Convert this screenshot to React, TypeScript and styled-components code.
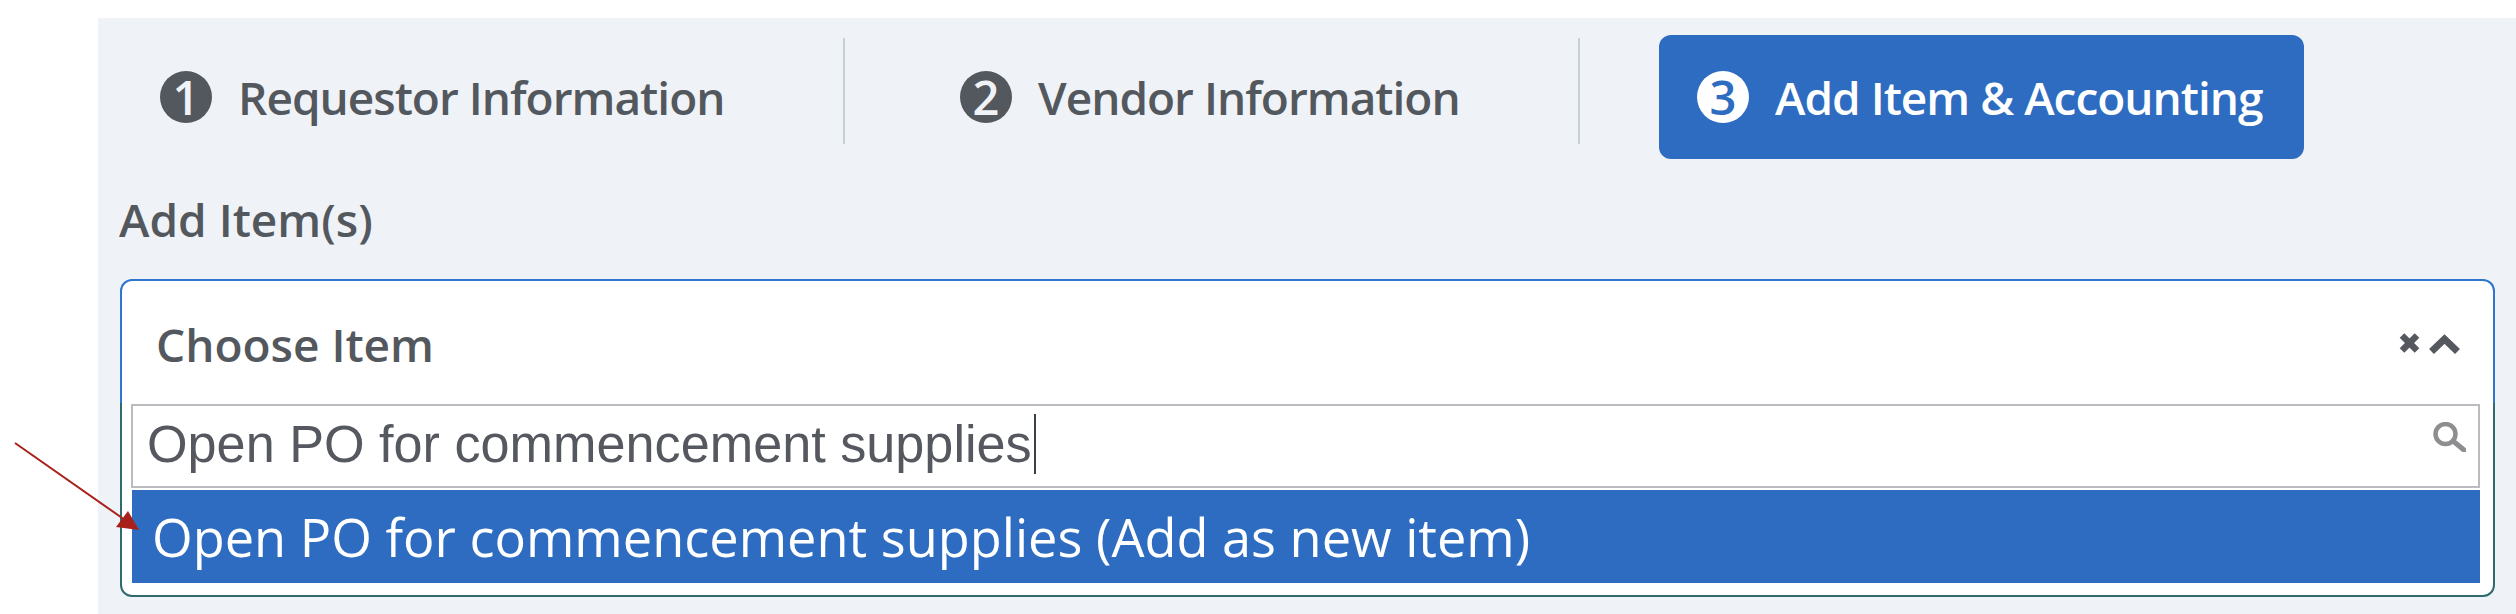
import React from "react";
import styled, { createGlobalStyle } from "styled-components";

const Global = createGlobalStyle`
  html, body { margin: 0; padding: 0; background: #fff; }
  body { width: 2516px; height: 614px; overflow: hidden; font-family: "Open Sans", sans-serif; }
`;

const Page = styled.div`
  position: relative;
  width: 2516px;
  height: 614px;
  padding: 18px 0 0 98px;
  box-sizing: border-box;
`;

const Panel = styled.div`
  height: 596px;
  background: #eff3f7;
  padding: 17px 21px 17px 21px;
  box-sizing: border-box;
`;

const Steps = styled.div`
  display: flex;
  align-items: center;
  height: 124px;
`;

const Step = styled.div<{ $active?: boolean; $width: number; $pad: number }>`
  display: flex;
  align-items: center;
  gap: 26px;
  width: ${(p) => p.$width}px;
  height: 124px;
  padding-left: ${(p) => p.$pad}px;
  box-sizing: border-box;
  border-radius: 12px;
  background: ${(p) => (p.$active ? "#2d6cc0" : "transparent")};
  color: ${(p) => (p.$active ? "#fff" : "#53585e")};
  font-size: 46px;
  letter-spacing: -1px;
  font-weight: 600;
  white-space: nowrap;
`;

const Num = styled.span<{ $active?: boolean }>`
  display: flex;
  align-items: center;
  justify-content: center;
  width: 52px;
  height: 52px;
  flex: none;
  border-radius: 50%;
  background: ${(p) => (p.$active ? "#fff" : "#53585e")};
  color: ${(p) => (p.$active ? "#2d6cc0" : "#eff3f7")};
  font-size: 47px;
  font-weight: 600;
  letter-spacing: 0;
  line-height: 1;
`;

const Divider = styled.div<{ $gap: number }>`
  width: 2px;
  height: 106px;
  align-self: flex-start;
  margin-top: 3px;
  background: #c6d1d6;
  margin-right: ${(p) => p.$gap}px;
`;

const Label = styled.div`
  margin-top: 32px;
  font-size: 46px;
  line-height: 56px;
  font-weight: 600;
  color: #53585e;
`;

const Select = styled.div`
  margin-top: 32px;
  margin-left: 1px;
  width: 2375px;
  height: 318px;
  box-sizing: border-box;
  border: 2px solid transparent;
  border-radius: 12px;
  background:
    linear-gradient(#fff, #fff) padding-box,
    linear-gradient(#2f76cf 0 124px, #2f6b6e 124px) border-box;
  padding: 0 13px 12px 9px;
  display: flex;
  flex-direction: column;
`;

const Head = styled.div`
  height: 123px;
  flex: none;
  box-sizing: border-box;
  display: flex;
  align-items: center;
  padding: 2px 20px 0 25px;
  color: #53585e;
  font-size: 46px;
  font-weight: 600;
`;

const HeadText = styled.span`
  flex: 1;
`;

const HeadIcons = styled.span`
  display: flex;
  align-items: center;
  gap: 9px;
  color: #55585e;
`;

const ClearIcon = styled.svg`
  margin-bottom: 2px;
`;

const Search = styled.div`
  height: 84px;
  flex: none;
  box-sizing: border-box;
  border: 2px solid #bcbcc0;
  display: flex;
  align-items: center;
  padding: 0 12px 4px 14px;
  font-family: "Liberation Sans", Arial, sans-serif;
  font-size: 52.2px;
  color: #55585e;
`;

const Caret = styled.span`
  display: inline-block;
  width: 2px;
  height: 60px;
  margin-left: 2px;
  background: #3a4048;
`;

const SearchIcon = styled.svg`
  margin-left: auto;
  margin-bottom: 14px;
  color: #8e8e90;
`;

const Option = styled.div`
  height: 93px;
  margin-top: 2px;
  margin-left: 1px;
  flex: none;
  display: flex;
  align-items: center;
  padding-left: 20px;
  background: #2d6cc0;
  color: #fff;
  font-size: 52.3px;
`;

const Arrow = styled.svg`
  position: absolute;
  left: 0;
  top: 430px;
`;

export default function App() {
  return (
    <Page>
      <Global />
      <Panel>
        <Steps>
          <Step $width={724} $pad={41}>
            <Num>1</Num>
            Requestor Information
          </Step>
          <Divider $gap={0} />
          <Step $width={733} $pad={115}>
            <Num>2</Num>
            Vendor Information
          </Step>
          <Divider $gap={79} />
          <Step $active $width={645} $pad={38}>
            <Num $active>3</Num>
            Add Item &amp; Accounting
          </Step>
        </Steps>
        <Label>Add Item(s)</Label>
        <Select>
          <Head>
            <HeadText>Choose Item</HeadText>
            <HeadIcons>
              <ClearIcon width="21" height="20" viewBox="0 0 21 20" fill="none" stroke="currentColor" strokeWidth="6.5">
                <line x1="3" y1="2.5" x2="18" y2="17.5" />
                <line x1="18" y1="2.5" x2="3" y2="17.5" />
              </ClearIcon>
              <svg width="31" height="20" viewBox="0 0 31 20" fill="none" stroke="currentColor" strokeWidth="7">
                <polyline points="2.5,17.5 15.5,5 28.5,17.5" />
              </svg>
            </HeadIcons>
          </Head>
          <Search>
            Open PO for commencement supplies
            <Caret />
            <SearchIcon width="33" height="30" viewBox="0 0 33 30" fill="none" stroke="currentColor">
              <circle cx="12.5" cy="12" r="10" strokeWidth="4.5" />
              <line x1="20" y1="19" x2="31" y2="28" strokeWidth="5" strokeLinecap="round" />
            </SearchIcon>
          </Search>
          <Option>Open PO for commencement supplies (Add as new item)</Option>
        </Select>
      </Panel>
      <Arrow width="150" height="110" viewBox="0 0 150 110">
        <line x1="15" y1="13" x2="125" y2="90" stroke="#a8201a" strokeWidth="2" />
        <polygon points="128,81 116,97 139,100" fill="#a8201a" />
      </Arrow>
    </Page>
  );
}
